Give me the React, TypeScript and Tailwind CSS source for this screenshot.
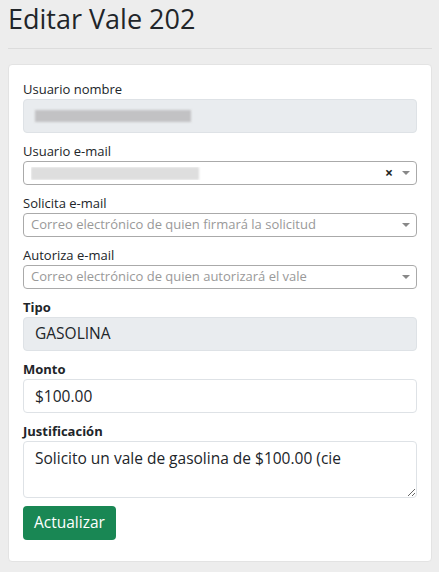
const label = 'block text-[13px] leading-[20px] text-[#212529]'
const boldLabel = 'block text-[13px] leading-[20px] font-bold text-[#212529]'
const input = 'w-full h-[34px] px-[11px] rounded-[4px] border border-[#dee2e6] text-[15.5px] text-[#212529] outline-none'

function Caret() {
  return (
    <svg width="8" height="4" viewBox="0 0 8 4" className="ml-[9px]">
      <path d="M0 0 L8 0 L4 4 Z" fill="#888" />
    </svg>
  )
}

function Select2({ placeholder, value, clear }: { placeholder?: string; value?: boolean; clear?: boolean }) {
  return (
    <div className="w-full h-[24px] rounded-[4px] border border-[#aaa] bg-white flex items-center pl-[7px] pr-[6px]">
      <div className="flex-1 min-w-0 truncate text-[13px] text-[#999]">
        {value ? <div className="h-[13px] w-[168px] bg-[#dedede] blur-[1px]" /> : placeholder}
      </div>
      {clear && <span className="text-[14px] font-bold text-[#222] leading-none">×</span>}
      <Caret />
    </div>
  )
}

export default function App() {
  return (
    <div className="h-[572px] overflow-hidden bg-[#ededed] pl-[8px] pr-[7px] pt-[1px]" style={{ fontFamily: '"Open Sans", sans-serif' }}>
      <h1 className="text-[27px] leading-[36px] text-[#212529] font-normal">Editar Vale 202</h1>
      <hr className="mt-[11px] border-t border-[#dcdcdc]" />
      <div className="mt-[15px] bg-white rounded-[4px] border border-[#e3e3e3] px-[14px] pt-[14px] pb-[21px] flex flex-col gap-[8px]">
        <div>
          <label className={label}>Usuario nombre</label>
          <div className={`${input} bg-[#e9ecef] flex items-center`}>
            <div className="h-[12px] w-[156px] bg-[#c2c2c4] blur-[1px]" />
          </div>
        </div>
        <div>
          <label className={label}>Usuario e-mail</label>
          <Select2 value clear />
        </div>
        <div>
          <label className={label}>Solicita e-mail</label>
          <Select2 placeholder="Correo electrónico de quien firmará la solicitud" />
        </div>
        <div>
          <label className={label}>Autoriza e-mail</label>
          <Select2 placeholder="Correo electrónico de quien autorizará el vale" />
        </div>
        <div>
          <label className={boldLabel}>Tipo</label>
          <div className={`${input} bg-[#e9ecef] flex items-center`}>GASOLINA</div>
        </div>
        <div>
          <label className={boldLabel}>Monto</label>
          <input className={`${input} bg-white`} defaultValue="$100.00" />
        </div>
        <div>
          <label className={boldLabel}>Justificación</label>
          <textarea
            className="w-full h-[57px] block px-[11px] py-[5px] rounded-[4px] border border-[#dee2e6] text-[15.5px] leading-[22px] text-[#212529] outline-none whitespace-nowrap overflow-hidden"
            defaultValue="Solicito un vale de gasolina de $100.00 (cie"
            wrap="off"
          />
        </div>
        <div>
          <button className="h-[34px] px-[11px] rounded-[4px] bg-[#198754] text-white text-[15.5px]">Actualizar</button>
        </div>
      </div>
    </div>
  )
}
